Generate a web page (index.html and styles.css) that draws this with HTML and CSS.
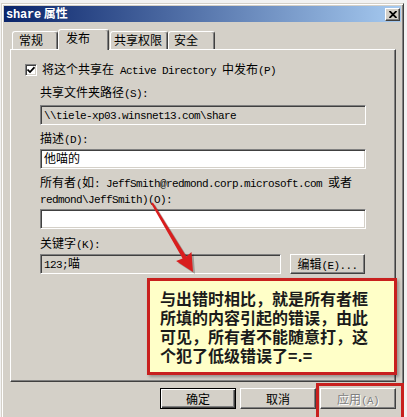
FILE: index.html
```html
<!DOCTYPE html>
<html lang="zh-CN">
<head>
  <meta charset="UTF-8">
  <meta name="viewport" content="width=device-width, initial-scale=1.0">
  <title>share 属性</title>
  <link rel="stylesheet" href="styles.css">
</head>
<body>
  <div class="window">
    <!-- Title bar -->
    <div class="titlebar">
      <span class="title"><span class="title-en">share</span> 属性</span>
      <span class="close-btn">
        <svg width="8" height="7" viewBox="0 0 8 7">
          <path d="M0.5 0 L7.5 7 M7.5 0 L0.5 7" stroke="#000" stroke-width="1.8"/>
        </svg>
      </span>
    </div>

    <!-- Tabs -->
    <div class="tabs">
      <div class="tab tab-general">常规</div>
      <div class="tab tab-active tab-publish">发布</div>
      <div class="tab tab-perm">共享权限</div>
      <div class="tab tab-security">安全</div>
    </div>

    <!-- Publish page -->
    <div class="panel">
      <div class="check-row">
        <span class="checkbox">
          <svg width="8" height="8" viewBox="0 0 8 8">
            <path d="M0.5 3.5 L3 6 L7.5 1.2" fill="none" stroke="#000" stroke-width="1.7"/>
          </svg>
        </span>
        <span>将这个共享在<span class="en"> Active Directory </span>中发布<span class="en">(P)</span></span>
      </div>

      <div class="label label-path">共享文件夹路径<span class="en">(S):</span></div>
      <div class="input readonly"><span class="en">\\tiele-xp03.winsnet13.com\share</span></div>

      <div class="label">描述<span class="en">(D):</span></div>
      <div class="input">他喵的</div>

      <div class="label">所有者<span class="en">(</span>如<span class="en">: JeffSmith@redmond.corp.microsoft.com </span>或者<br><span class="en">redmond\JeffSmith)(O):</span></div>
      <div class="input"></div>

      <div class="label label-keyword">关键字<span class="en">(K):</span></div>
      <div class="keyword-row">
        <div class="input readonly input-keyword"><span class="en">123;</span>喵</div>
        <div class="btn">编辑<span class="en">(E)...</span></div>
      </div>
    </div>

    <!-- Dialog buttons -->
    <div class="footer">
      <div class="btn btn-default">确定</div>
      <div class="btn">取消</div>
      <div class="btn btn-disabled">应用<span class="en">(A)</span></div>
    </div>
  </div>

  <!-- Annotations drawn over the screenshot -->
  <svg class="arrow" width="80" height="85" viewBox="0 0 80 85">
    <g fill="rgba(0,0,0,0.25)" transform="translate(2 2)">
      <path d="M12.9 7.5 L46.4 61.4 L51.5 56.9 L53 77 L36.1 66.1 L42.6 63.6 L11.1 8.5 Z"/>
    </g>
    <path d="M12.9 7.5 L46.4 61.4 L51.5 56.9 L53 77 L36.1 66.1 L42.6 63.6 L11.1 8.5 Z" fill="#d81e1e"/>
  </svg>

  <div class="callout">
    与出错时相比，就是所有者框<br>
    所填的内容引起的错误，由此<br>
    可见，所有者不能随意打，这<br>
    个犯了低级错误了=.=
  </div>

  <div class="highlight"></div>
</body>
</html>
```

FILE: styles.css
```css
/* Basic Reset */
* {
  margin: 0;
  padding: 0;
  box-sizing: border-box;
}

body {
  position: relative;
  height: 417px;
  overflow: hidden;
  background-color: #f2f2f2;
  font-family: "Noto Sans CJK SC", sans-serif;
  font-size: 12px;
  color: #000;
}

.en {
  font-family: "Liberation Mono", monospace;
  font-size: 11px;
  letter-spacing: -0.6px;
}

/* Window frame */
.window {
  margin: 3px 0 0 1px;
  width: 403px;
  height: 420px;
  padding: 2px 2px 0 2px;
  background-color: #d4d0c8;
  border: 1px solid;
  border-color: #d4d0c8 #404040 #404040 #d4d0c8;
  box-shadow: inset 1px 1px 0 #fff, inset -1px -1px 0 #808080;
}

.titlebar {
  height: 16px;
  display: flex;
  align-items: center;
  justify-content: space-between;
  padding: 0 1px 0 2px;
  background: linear-gradient(to right, #0a246a, #a6caf0);
}

.title {
  color: #fff;
  font-weight: bold;
  line-height: 16px;
}

.title-en {
  font-family: "Liberation Mono", monospace;
  font-size: 12px;
  letter-spacing: -0.2px;
}

.close-btn {
  width: 15px;
  height: 13px;
  display: flex;
  align-items: center;
  justify-content: center;
  background-color: #d4d0c8;
  border: 1px solid;
  border-color: #fff #404040 #404040 #fff;
  box-shadow: inset -1px -1px 0 #808080;
}

/* Tabs */
.tabs {
  display: flex;
  align-items: flex-end;
  height: 21px;
  margin-top: 7px;
  padding-left: 8px;
}

.tab {
  height: 18px;
  margin-bottom: 1px;
  padding-left: 6px;
  line-height: 16px;
  border: 1px solid;
  border-bottom: none;
  border-color: #fff #404040 transparent #fff;
  border-radius: 3px 3px 0 0;
  box-shadow: inset -1px 0 0 #808080;
}

.tab-general { width: 46px; }
.tab-publish { width: 51px; padding-left: 7px; }
.tab-perm { width: 58px; margin-left: 1px; padding-left: 3px; }
.tab-security { width: 47px; padding-left: 5px; }

.tab-active {
  position: relative;
  z-index: 1;
  height: 21px;
  margin-bottom: 0;
  background-color: #d4d0c8;
}

.panel {
  width: 386px;
  height: 333px;
  margin: -1px 0 0 6px;
  padding: 0 29px;
  border: 1px solid;
  border-color: #fff #404040 #404040 #fff;
  box-shadow: inset -1px -1px 0 #808080;
}

.check-row {
  display: flex;
  align-items: center;
  gap: 5px;
  height: 13px;
  margin: 13px 0 0 -15px;
  line-height: 13px;
}

.checkbox {
  width: 12px;
  height: 12px;
  display: flex;
  align-items: center;
  justify-content: center;
  background-color: #fff;
  border: 1px solid;
  border-color: #808080 #fff #fff #808080;
  box-shadow: inset 1px 1px 0 #404040, inset -1px -1px 0 #d4d0c8;
}

.label {
  margin-top: 6px;
  line-height: 13px;
}

.label-path {
  margin-top: 9px;
}

.label-keyword {
  margin-top: 7px;
}

.input {
  height: 20px;
  margin-top: 2px;
  padding-left: 3px;
  line-height: 16px;
  background-color: #fff;
  border: 1px solid;
  border-color: #808080 #fff #fff #808080;
  box-shadow: inset 1px 1px 0 #404040, inset -1px -1px 0 #d4d0c8;
}

.label-path + .input {
  margin-top: 4px;
}

.readonly {
  background-color: #d4d0c8;
}

.keyword-row {
  display: flex;
  gap: 9px;
  margin-top: 2px;
}

.keyword-row .input {
  width: 241px;
  margin-top: 0;
}

.btn {
  width: 75px;
  height: 20px;
  line-height: 18px;
  text-align: center;
  background-color: #d4d0c8;
  border: 1px solid;
  border-color: #fff #404040 #404040 #fff;
  box-shadow: inset -1px -1px 0 #808080;
}

.footer {
  display: flex;
  justify-content: flex-end;
  gap: 4px;
  margin-top: 6px;
  padding-right: 5px;
}

.footer .btn {
  width: 76px;
  height: 21px;
  line-height: 19px;
}

.btn-default {
  border-color: #000;
  box-shadow: inset 1px 1px 0 #fff, inset -1px -1px 0 #404040, inset -2px -2px 0 #808080;
}

.btn-disabled {
  color: #808080;
  text-shadow: 1px 1px 0 #fff;
}

/* Annotations */
.arrow {
  position: absolute;
  left: 140px;
  top: 195px;
}

.callout {
  position: absolute;
  left: 147px;
  top: 278px;
  width: 250px;
  height: 97px;
  padding: 8px 0 0 10px;
  background-color: #ffffc8;
  border: 3px solid #c8201e;
  box-shadow: 2px 2px 3px rgba(0, 0, 0, 0.3);
  color: #1b1b1b;
  font-size: 16px;
  font-weight: bold;
  line-height: 19px;
  white-space: nowrap;
}

.highlight {
  position: absolute;
  left: 316px;
  top: 383px;
  width: 88px;
  height: 40px;
  border: 3px solid #c8201e;
}
```
